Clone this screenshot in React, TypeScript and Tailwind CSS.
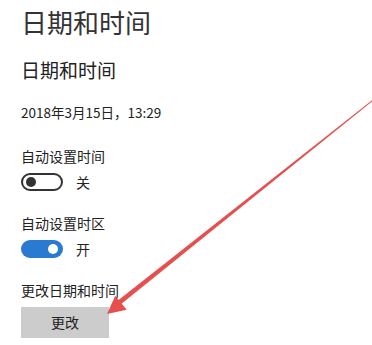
import React from "react";

const font = { fontFamily: '"Noto Sans CJK SC", "Noto Sans", sans-serif' };

export default function App() {
  return (
    <div
      className="relative w-[372px] h-[345px] overflow-hidden bg-white text-[#222]"
      style={font}
    >
      <div className="flex flex-col pl-[21px] pt-[4px]">
        <div className="text-[26px] leading-[36px] text-[#333]">日期和时间</div>
        <div className="mt-[16px] text-[19px] leading-[28px] text-[#222]">日期和时间</div>
        <div className="mt-[18px] text-[13.5px] leading-[20px] text-[#222]">2018年3月15日，13:29</div>

        <div className="mt-[24px] text-[14px] leading-[20px]">自动设置时间</div>
        <div className="mt-[7px] flex items-center gap-[13px] h-[18px]">
          <div className="w-[42px] h-[18px] rounded-full border-2 border-[#333] flex items-center pl-[3px] box-border">
            <div className="w-[10px] h-[10px] rounded-full bg-[#333]" />
          </div>
          <span className="text-[14px] leading-[20px]">关</span>
        </div>

        <div className="mt-[22px] text-[14px] leading-[20px]">自动设置时区</div>
        <div className="mt-[7px] flex items-center gap-[13px] h-[18px]">
          <div className="w-[42px] h-[18px] rounded-full bg-[#2a7ad2] flex items-center justify-end pr-[5px] box-border">
            <div className="w-[10px] h-[10px] rounded-full bg-white" />
          </div>
          <span className="text-[14px] leading-[20px]">开</span>
        </div>

        <div className="mt-[22px] text-[14px] leading-[20px]">更改日期和时间</div>
        <div className="mt-[7px] w-[88px] h-[31px] bg-[#cccccc] flex items-center justify-center text-[14px]">
          更改
        </div>
      </div>

      <svg
        className="absolute left-0 top-0 pointer-events-none"
        width="372"
        height="345"
        viewBox="0 0 372 345"
      >
        <polygon
          points="372,100.2 372.6,101.0 120.6,304.6 117.6,300.8"
          fill="#e5504f"
        />
        <polygon points="107,314 115.3,295.7 126.7,309.7" fill="#e5504f" />
      </svg>
    </div>
  );
}
